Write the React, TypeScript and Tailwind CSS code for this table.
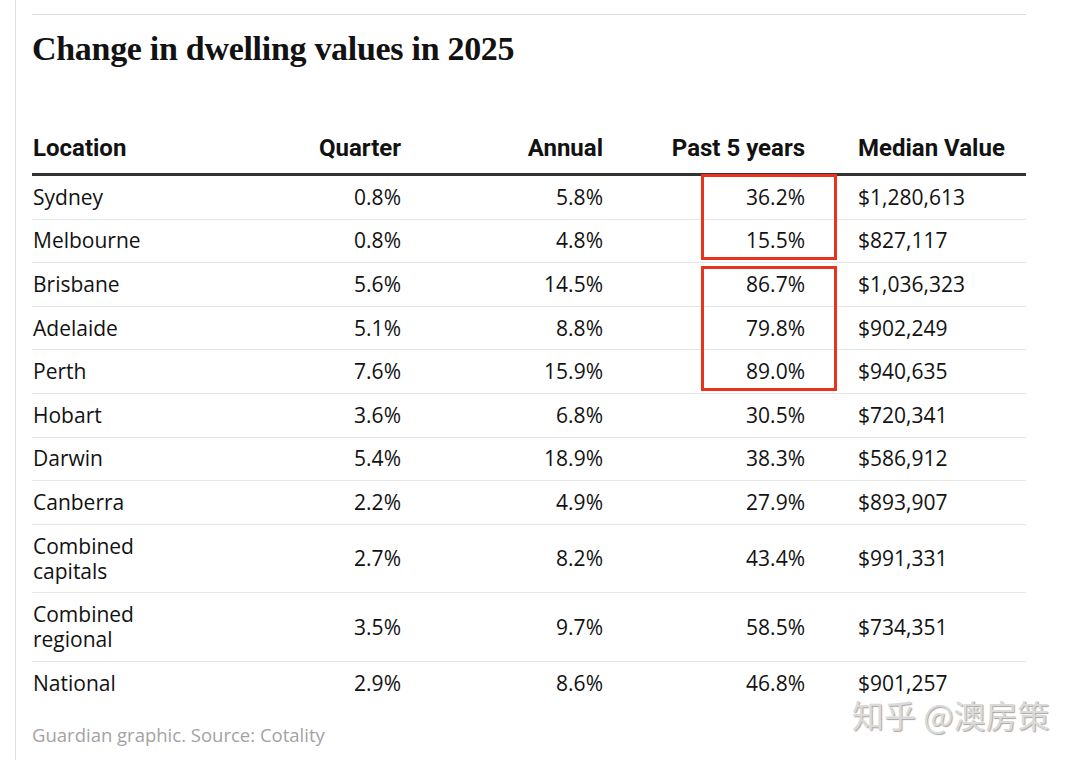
const rows = [
  { loc: ['Sydney'], q: '0.8%', a: '5.8%', p: '36.2%', m: '$1,280,613' },
  { loc: ['Melbourne'], q: '0.8%', a: '4.8%', p: '15.5%', m: '$827,117' },
  { loc: ['Brisbane'], q: '5.6%', a: '14.5%', p: '86.7%', m: '$1,036,323' },
  { loc: ['Adelaide'], q: '5.1%', a: '8.8%', p: '79.8%', m: '$902,249' },
  { loc: ['Perth'], q: '7.6%', a: '15.9%', p: '89.0%', m: '$940,635' },
  { loc: ['Hobart'], q: '3.6%', a: '6.8%', p: '30.5%', m: '$720,341' },
  { loc: ['Darwin'], q: '5.4%', a: '18.9%', p: '38.3%', m: '$586,912' },
  { loc: ['Canberra'], q: '2.2%', a: '4.9%', p: '27.9%', m: '$893,907' },
  { loc: ['Combined', 'capitals'], q: '2.7%', a: '8.2%', p: '43.4%', m: '$991,331' },
  { loc: ['Combined', 'regional'], q: '3.5%', a: '9.7%', p: '58.5%', m: '$734,351' },
  { loc: ['National'], q: '2.9%', a: '8.6%', p: '46.8%', m: '$901,257' },
];

const grid = 'grid grid-cols-[200px_169px_202px_202px_221px]';

export default function App() {
  return (
    <div className="relative h-[760px] w-[1080px] overflow-hidden bg-white">
      <div className="ml-[15px] h-full border-l border-[#dedede] pl-[16px]">
        <div className="w-[994px] pt-[14px]">
          <div className="border-t border-[#dcdcdc]" />

          <h1 className="mt-[14px] font-['Liberation_Serif',serif] text-[34px] font-bold leading-[40px] tracking-[-0.3px] text-[#121212]">
            Change in dwelling values in 2025
          </h1>

          <div
            className={`${grid} mt-[64px] border-b-[3px] border-[#333333] pb-[10px] font-['Roboto',sans-serif] text-[24px] font-bold leading-[30px] text-[#121212]`}
          >
            <div className="pl-px">Location</div>
            <div className="text-right">Quarter</div>
            <div className="text-right">Annual</div>
            <div className="text-right">Past 5 years</div>
            <div className="pl-[53px]">Median Value</div>
          </div>

          <div className="font-['Open_Sans',sans-serif] text-[21px] leading-[25px] text-[#121212]">
            {rows.map((r, i) => (
              <div
                key={r.loc.join(' ')}
                className={`${grid} items-center py-[8.8px] ${
                  i < rows.length - 1 ? 'border-b border-[#e6e6e6]' : ''
                }`}
              >
                <div className="pl-px">
                  {r.loc.map((l) => (
                    <div key={l}>{l}</div>
                  ))}
                </div>
                <div className="text-right">{r.q}</div>
                <div className="text-right">{r.a}</div>
                <div className="text-right">{r.p}</div>
                <div className="pl-[53px]">{r.m}</div>
              </div>
            ))}
          </div>

          <p className="mt-[18px] font-['Open_Sans',sans-serif] text-[18.5px] leading-[24px] text-[#a3a3a3]">
            Guardian graphic. Source: Cotality
          </p>
        </div>
      </div>

      {/* highlight boxes */}
      <div className="absolute left-[701px] top-[174px] h-[86px] w-[136px] border-[3px] border-[#e8341c]" />
      <div className="absolute left-[701px] top-[266px] h-[125px] w-[136px] border-[3px] border-[#e8341c]" />

      {/* watermark */}
      <div className="absolute left-[852px] top-[699px] font-['Noto_Sans_CJK_SC',sans-serif] text-[32px] leading-[30px] text-[#dadada] [text-shadow:1px_1px_1px_rgba(0,0,0,0.35)]">
        知乎 @澳房策
      </div>
    </div>
  );
}
